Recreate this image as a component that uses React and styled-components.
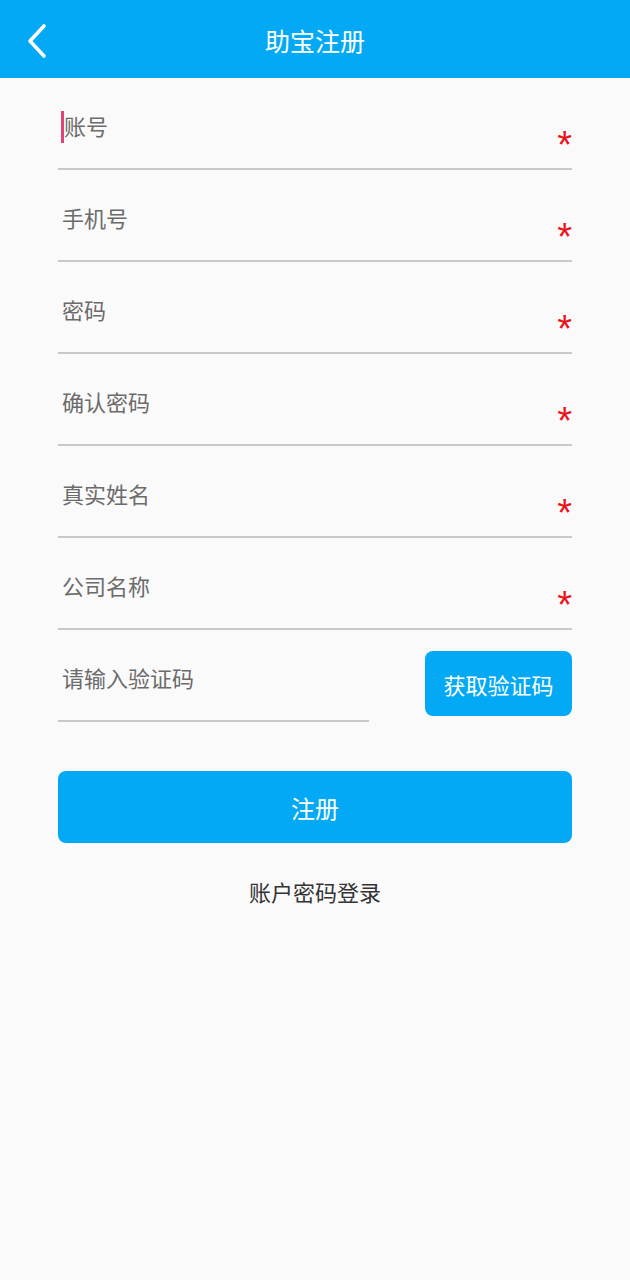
import React from "react";
import styled, { createGlobalStyle } from "styled-components";

const Global = createGlobalStyle`
  html, body { margin: 0; padding: 0; background: #fafafa; }
  body { font-family: "Noto Sans CJK SC", "Noto Sans", sans-serif; }
  * { box-sizing: border-box; }
`;

const Page = styled.div`
  width: 630px;
  min-height: 1280px;
  background: #fafafa;
`;

const Header = styled.header`
  height: 78px;
  background: #03a9f4;
  display: flex;
  align-items: center;
  justify-content: center;
  position: relative;
`;

const BackButton = styled.button`
  position: absolute;
  left: 20px;
  top: 20px;
  width: 34px;
  height: 42px;
  padding: 0;
  border: none;
  background: transparent;
  display: flex;
  align-items: center;
  justify-content: center;
`;

const Title = styled.h1`
  margin: 2px 0 0;
  font-size: 25px;
  font-weight: 400;
  color: #fff;
  line-height: 32px;
`;

const Form = styled.div`
  margin: 0 58px;
  display: flex;
  flex-direction: column;
`;

const Field = styled.div`
  position: relative;
  height: 92px;
  border-bottom: 2px solid #c9c9c9;
  display: flex;
  justify-content: space-between;
  align-items: flex-start;
  width: ${(p) => (p.$width ? `${p.$width}px` : "auto")};
`;

const Label = styled.span`
  padding: 32px 0 0 ${(p) => (p.$focused ? "6px" : "4px")};
  font-size: 22px;
  line-height: 30px;
  color: #6b6b6b;
`;

const Caret = styled.span`
  position: absolute;
  left: 3px;
  top: 33px;
  width: 3px;
  height: 32px;
  background: #e0457a;
`;

const Star = styled.span`
  margin-top: 48px;
  font-family: "Liberation Sans", Arial, sans-serif;
  font-size: 38px;
  line-height: 38px;
  color: #e8141a;
`;

const VerifyRow = styled.div`
  display: flex;
  justify-content: space-between;
  align-items: flex-start;
  height: 92px;
`;

const CodeButton = styled.button`
  margin-top: 21px;
  width: 147px;
  height: 65px;
  border: none;
  border-radius: 8px;
  background: #03a9f4;
  color: #fff;
  font-family: "Noto Sans CJK SC", "Noto Sans", sans-serif;
  font-size: 22px;
  padding: 0;
`;

const SubmitButton = styled.button`
  margin-top: 49px;
  height: 72px;
  width: 100%;
  border: none;
  border-radius: 8px;
  background: #03a9f4;
  color: #fff;
  font-family: "Noto Sans CJK SC", "Noto Sans", sans-serif;
  font-size: 24px;
  padding: 0;
`;

const LinkText = styled.div`
  margin-top: 33px;
  text-align: center;
  font-size: 22px;
  line-height: 30px;
  color: #333;
`;

const fields = ["账号", "手机号", "密码", "确认密码", "真实姓名", "公司名称"];

export default function App() {
  return (
    <Page>
      <Global />
      <Header>
        <BackButton aria-label="返回">
          <svg width="22" height="36" viewBox="0 0 22 36" fill="none">
            <path
              d="M18 3 L4 18 L18 33"
              stroke="#fff"
              strokeWidth="3.6"
              strokeLinecap="round"
              strokeLinejoin="round"
            />
          </svg>
        </BackButton>
        <Title>助宝注册</Title>
      </Header>
      <Form>
        {fields.map((f, i) => (
          <Field key={f}>
            {i === 0 && <Caret />}
            <Label $focused={i === 0}>{f}</Label>
            <Star>*</Star>
          </Field>
        ))}
        <VerifyRow>
          <Field $width={311}>
            <Label>请输入验证码</Label>
          </Field>
          <CodeButton>获取验证码</CodeButton>
        </VerifyRow>
        <SubmitButton>注册</SubmitButton>
        <LinkText>账户密码登录</LinkText>
      </Form>
    </Page>
  );
}
